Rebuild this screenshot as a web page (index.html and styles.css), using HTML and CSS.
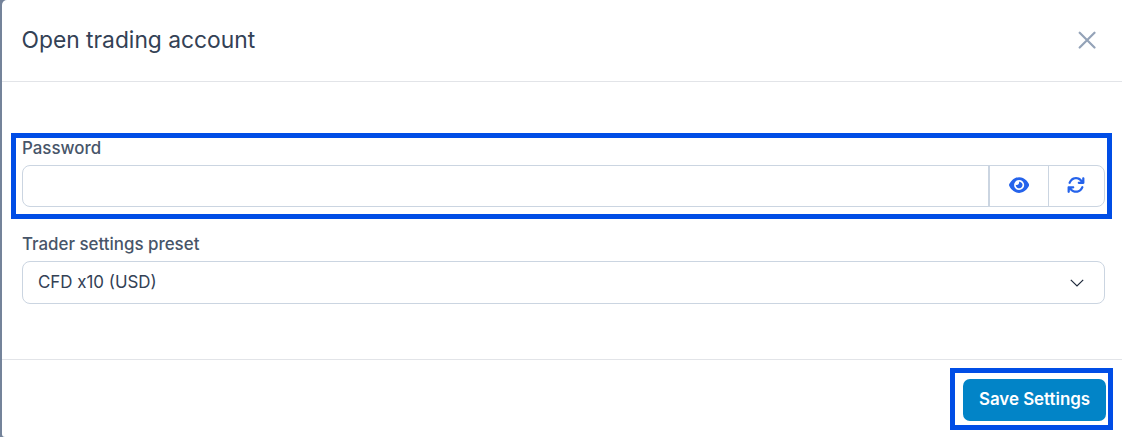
FILE: index.html
```
<!DOCTYPE html>
<html lang="en">

<head>
    <meta charset="UTF-8">
    <meta name="viewport" content="width=device-width, initial-scale=1.0">
    <title>Open trading account</title>
    <link rel="stylesheet" href="styles.css">
</head>

<body>
    <div class="modal">
        <div class="header">
            <h2 class="title">Open trading account</h2>
            <button class="close" aria-label="Close">
                <svg width="18" height="18" viewBox="0 0 18 18">
                    <path d="M1.7 1.7l14.8 14.8M16.5 1.7L1.7 16.5" />
                </svg>
            </button>
        </div>
        <div class="content">
            <div class="highlight field password">
                <label class="label" for="password">Password</label>
                <div class="input-group">
                    <input class="input" id="password" type="password">
                    <button class="icon-button show" aria-label="Show password">
                        <svg width="20.25" height="18" viewBox="0 0 576 512">
                            <path d="M288 32c-80.8 0-145.5 36.8-192.6 80.6C48.6 156 17.3 208 2.5 243.7c-3.3 7.9-3.3 16.7 0 24.6C17.3 304 48.6 356 95.4 399.4C142.5 443.2 207.2 480 288 480s145.5-36.8 192.6-80.6c46.8-43.5 78.1-95.4 93-131.1c3.3-7.9 3.3-16.7 0-24.6c-14.9-35.7-46.2-87.7-93-131.1C433.5 68.8 368.8 32 288 32zM144 256a144 144 0 1 1 288 0 144 144 0 1 1 -288 0zm144-64c0 35.3-28.7 64-64 64c-7.1 0-13.9-1.2-20.3-3.3c-5.5-1.8-11.9 1.6-11.7 7.4c.3 6.9 1.3 13.8 3.2 20.7c13.7 51.2 66.4 81.6 117.6 67.9s81.6-66.4 67.9-117.6c-11.1-41.5-47.8-69.4-88.6-71.1c-5.8-.2-9.2 6.1-7.4 11.7c2.1 6.4 3.3 13.2 3.3 20.3z" />
                        </svg>
                    </button>
                    <button class="icon-button generate" aria-label="Generate password">
                        <svg width="18" height="18" viewBox="0 0 512 512">
                            <path d="M105.1 202.6c7.7-21.8 20.2-42.3 37.8-59.8c62.5-62.5 163.8-62.5 226.3 0L386.3 160H336c-17.7 0-32 14.3-32 32s14.3 32 32 32H463.9c17.7 0 32-14.3 32-32V64c0-17.7-14.3-32-32-32s-32 14.3-32 32v51.2L414.4 97.6c-87.5-87.5-229.3-87.5-316.8 0C73.2 122 55.6 150.7 44.8 181.4c-5.9 16.7 2.9 34.9 19.5 40.8s34.9-2.9 40.8-19.5zM39 289.3c-5 1.5-9.8 4.2-13.7 8.2c-4 4-6.7 8.8-8.1 14c-.3 1.2-.6 2.5-.8 3.8c-.3 1.7-.4 3.4-.4 5.1V448c0 17.7 14.3 32 32 32s32-14.3 32-32V396.9l17.6 17.5c87.5 87.4 229.3 87.4 316.7 0c24.4-24.4 42.1-53.1 52.9-83.8c5.9-16.7-2.9-34.9-19.5-40.8s-34.9 2.9-40.8 19.5c-7.7 21.8-20.2 42.3-37.8 59.8c-62.5 62.5-163.8 62.5-226.3 0l-.1-.1L125.6 352H176c17.7 0 32-14.3 32-32s-14.3-32-32-32H48.4c-1.6 0-3.2 .1-4.8 .3s-3.1 .5-4.6 1z" />
                        </svg>
                    </button>
                </div>
            </div>
            <div class="field preset">
                <div class="label">Trader settings preset</div>
                <div class="select">
                    <span>CFD x10 (USD)</span>
                    <svg width="14" height="8" viewBox="0 0 14 8">
                        <path d="M.8 .8L7 7L13.2 .8" />
                    </svg>
                </div>
            </div>
        </div>
        <div class="footer">
            <div class="highlight save">
                <button class="button">Save Settings</button>
            </div>
        </div>
    </div>
</body>

</html>
```

FILE: styles.css
```
* {
    box-sizing: border-box;
}

body {
    margin: 0;
    height: 437px;
    padding-left: 1.5px;
    background-color: #74839a;
    font-family: Inter, "Liberation Sans", sans-serif;
    overflow: hidden;
}

button {
    padding: 0;
    border: 0;
    background: none;
    font-family: inherit;
    cursor: pointer;
}

svg {
    display: block;
}

.modal {
    display: flex;
    flex-direction: column;
    height: 437px;
    background-color: #fff;
    border-radius: 5px 0 0 3px;
}

.header {
    display: flex;
    align-items: center;
    justify-content: space-between;
    height: 82px;
    padding: 0 26px 1px 20px;
    border-bottom: 1px solid #e2e4e8;
}

.title {
    margin: 0;
    padding-bottom: 2px;
    font-size: 22.8px;
    font-weight: 400;
    color: #334155;
}

.close svg {
    fill: none;
    stroke: #94a3b8;
    stroke-width: 2.2;
    stroke-linecap: round;
}

.content {
    flex: 1;
    padding: 51px 10px 0 9.5px;
}

/* blue frame around the important parts */
.highlight {
    border: 5px solid #004de6;
}

.label {
    display: block;
    font-size: 16.9px;
    font-weight: 500;
    line-height: 20px;
    color: #475569;
}

.password {
    height: 86px;
    padding: 0 2px 0 6px;
}

.input-group {
    display: flex;
    height: 42px;
    margin-top: 7px;
    border: 1px solid #cbd5e1;
    border-radius: 8px;
}

.input {
    flex: 1;
    min-width: 0;
    border: 0;
    outline: none;
    background: none;
}

.icon-button {
    display: flex;
    align-items: center;
    justify-content: center;
    padding-bottom: 2px;
    border-left: 1px solid #cbd5e1;
}

.icon-button svg {
    fill: #2563eb;
}

.icon-button.show {
    width: 60px;
    border-left-width: 2px;
}

.icon-button.generate {
    width: 56px;
    padding-right: 1px;
}

.preset {
    padding: 15px 7px 0 11px;
}

.select {
    display: flex;
    align-items: center;
    justify-content: space-between;
    height: 43px;
    margin-top: 7px;
    padding: 0 20px 0 15px;
    border: 1px solid #cbd5e1;
    border-radius: 8px;
    font-size: 16.9px;
    color: #334155;
}

.select span {
    padding-bottom: 2px;
}

.select svg {
    fill: none;
    stroke: #1e293b;
    stroke-width: 1.2;
}

.footer {
    display: flex;
    justify-content: flex-end;
    height: 78px;
    padding: 8px 9px 0 0;
    border-top: 1px solid #e2e4e8;
}

.save {
    width: 163px;
    height: 62px;
    padding: 6px 2px 4px 8px;
}

.button {
    width: 143px;
    height: 42px;
    padding-bottom: 2px;
    border-radius: 7px;
    background-color: #0284c7;
    font-size: 16.9px;
    font-weight: 600;
    color: #fff;
}
```
